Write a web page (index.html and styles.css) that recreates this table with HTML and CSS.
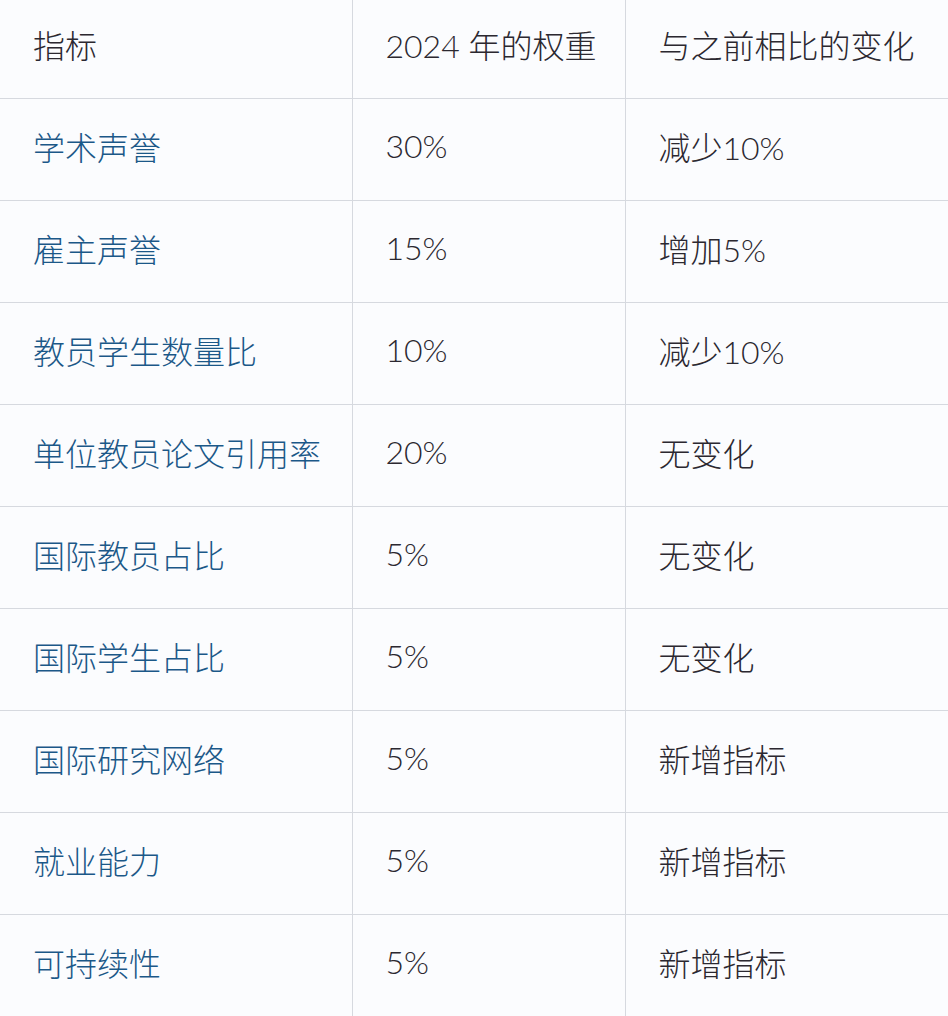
FILE: index.html
```html
<!DOCTYPE html>
<html lang="zh-CN">
<head>
<meta charset="utf-8">
<title>指标权重</title>
<link rel="stylesheet" href="styles.css">
</head>
<body>
<table class="weights">
  <thead>
    <tr><th class="col-a">指标</th><th class="col-b">2024 年的权重</th><th class="col-c">与之前相比的变化</th></tr>
  </thead>
  <tbody>
    <tr><td class="name">学术声誉</td><td>30%</td><td>减少10%</td></tr>
    <tr><td class="name">雇主声誉</td><td>15%</td><td>增加5%</td></tr>
    <tr><td class="name">教员学生数量比</td><td>10%</td><td>减少10%</td></tr>
    <tr><td class="name">单位教员论文引用率</td><td>20%</td><td>无变化</td></tr>
    <tr><td class="name">国际教员占比</td><td>5%</td><td>无变化</td></tr>
    <tr><td class="name">国际学生占比</td><td>5%</td><td>无变化</td></tr>
    <tr><td class="name">国际研究网络</td><td>5%</td><td>新增指标</td></tr>
    <tr><td class="name">就业能力</td><td>5%</td><td>新增指标</td></tr>
    <tr><td class="name">可持续性</td><td>5%</td><td>新增指标</td></tr>
  </tbody>
</table>
</body>
</html>
```

FILE: styles.css
```css
html, body {
  margin: 0;
  padding: 0;
  background: #fbfcfe;
  overflow: hidden;
}
.weights {
  border-collapse: collapse;
  table-layout: fixed;
  width: 960px;
  margin-top: -4px;
  font-family: Lato, "Noto Sans CJK SC", sans-serif;
  font-weight: 300;
  font-size: 32px;
  color: #2b2830;
}
.weights th,
.weights td {
  border: 1px solid #d6d9df;
  height: 102px;
  padding: 0 0 8px 33px;
  text-align: left;
  vertical-align: middle;
  font-weight: 300;
  box-sizing: border-box;
}
.weights thead th {
  height: 102px;
}
.weights .col-a { width: 352px; }
.weights .col-b { width: 273px; }
.weights th:first-child,
.weights td:first-child { border-left: none; }
.weights .name { color: #1b5888; }
```
